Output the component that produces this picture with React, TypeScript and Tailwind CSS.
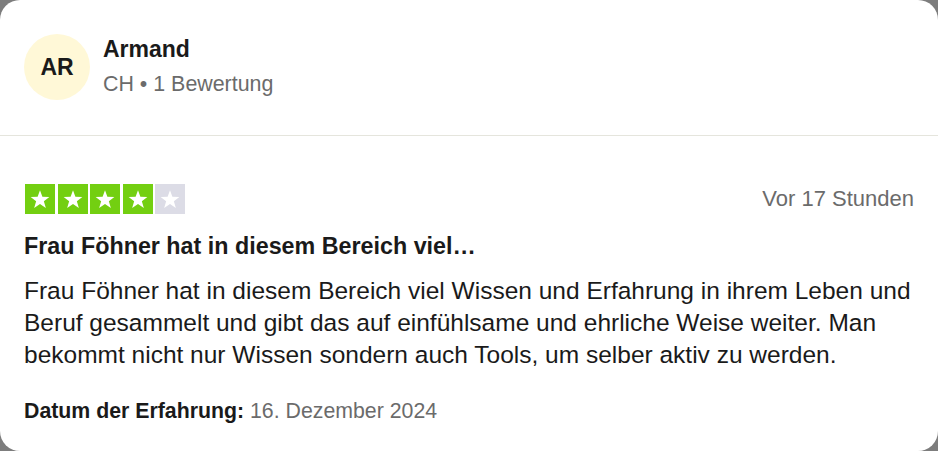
const Star = ({ on }: { on: boolean }) => (
  <div
    className={`w-[30px] h-[30px] flex items-center justify-center ${on ? "bg-[#73cf11]" : "bg-[#dcdce6]"}`}
  >
    <svg viewBox="0 0 24 24" className="w-[22px] h-[22px]" fill="#ffffff">
      <path d="M12 2.5l2.6 7.1 7.6.2-6 4.7 2.2 7.3L12 17.5l-6.4 4.3 2.2-7.3-6-4.7 7.6-.2z" />
    </svg>
  </div>
);

const App = () => {
  return (
    <div className="w-[938px] h-[451px] bg-[#7d7d7d] font-['Liberation_Sans',Arial,sans-serif]">
      <div className="w-full h-full bg-white rounded-[20px] flex flex-col">
        <div className="flex items-center gap-[13px] px-[24px] pt-[34px] pb-[35px] border-b border-[#e5e5dd]">
          <div className="w-[66px] h-[66px] rounded-full bg-[#fff8d7] flex items-center justify-center text-[23px] font-bold text-[#1a1a1a]">
            AR
          </div>
          <div className="flex flex-col gap-[8px] -mt-[2px]">
            <div className="text-[23px] font-bold text-[#1a1a1a] leading-[28px]">Armand</div>
            <div className="text-[21.4px] text-[#6b6b6b] leading-[26px]">CH • 1 Bewertung</div>
          </div>
        </div>

        <div className="px-[24px] pt-[46px] flex flex-col">
          <div className="flex items-center justify-between">
            <div className="flex gap-[2.5px] pl-[1px]">
              <Star on />
              <Star on />
              <Star on />
              <Star on />
              <Star on={false} />
            </div>
            <div className="text-[22px] text-[#6b6b6b]">Vor 17 Stunden</div>
          </div>
          <h2 className="mt-[17px] text-[23.3px] font-bold text-[#1a1a1a] leading-[28px]">
            Frau Föhner hat in diesem Bereich viel…
          </h2>
          <p className="mt-[15px] text-[24.5px] text-[#1a1a1a] leading-[32px]">
            Frau Föhner hat in diesem Bereich viel Wissen und Erfahrung in ihrem Leben und Beruf
            gesammelt und gibt das auf einfühlsame und ehrliche Weise weiter. Man bekommt nicht nur
            Wissen sondern auch Tools, um selber aktiv zu werden.
          </p>
          <div className="mt-[27px] text-[21.3px] leading-[26px]">
            <span className="font-bold text-[#1a1a1a]">Datum der Erfahrung:</span>{" "}
            <span className="text-[#6b6b6b]">16. Dezember 2024</span>
          </div>
        </div>
      </div>
    </div>
  );
};

export default App;
